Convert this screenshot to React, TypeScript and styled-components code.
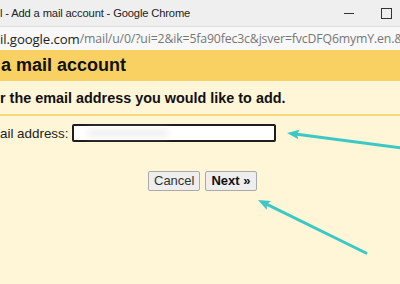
import React from 'react';
import styled, { createGlobalStyle } from 'styled-components';

const GlobalStyle = createGlobalStyle`
  html, body {
    margin: 0;
    padding: 0;
    width: 400px;
    height: 284px;
    overflow: hidden;
    background: #fff6d8;
  }
`;

const Window = styled.div`
  position: relative;
  width: 400px;
  height: 284px;
  overflow: hidden;
  display: flex;
  flex-direction: column;
  background: #fff6d8;
`;

const TitleBar = styled.div`
  height: 26px;
  display: flex;
  align-items: center;
  justify-content: space-between;
  background: #efefef;
  font-family: 'Liberation Sans', Arial, sans-serif;
  font-size: 11.2px;
  letter-spacing: -0.15px;
  color: #222;
  white-space: nowrap;
`;

const WindowControls = styled.div`
  display: flex;
  align-items: center;
  gap: 27px;
  padding-right: 8px;
`;

const MinimizeGlyph = styled.span`
  width: 10px;
  height: 1px;
  background: #333;
`;

const MaximizeGlyph = styled.span`
  width: 9px;
  height: 9px;
  border: 1px solid #333;
`;

const AddressBar = styled.div`
  height: 24px;
  display: flex;
  align-items: center;
  background: #f8f8f8;
  border-top: 1px solid #dcdcdc;
  box-sizing: border-box;
  font-family: 'Open Sans', 'Noto Sans', sans-serif;
  font-size: 12.3px;
  color: #777;
  white-space: nowrap;
  overflow: hidden;
  letter-spacing: -0.15px;
`;

const Host = styled.span`
  color: #222;
  font-size: 13.2px;
  letter-spacing: -0.1px;
`;

const Header = styled.div`
  height: 31px;
  display: flex;
  align-items: center;
  background: #f9d062;
  font-family: 'Liberation Sans', Arial, sans-serif;
  font-weight: bold;
  font-size: 18px;
  color: #111;
  padding-left: 1px;
`;

const Instruction = styled.div`
  height: 33px;
  display: flex;
  align-items: center;
  border-bottom: 2px solid #f6d77d;
  font-family: 'Liberation Sans', Arial, sans-serif;
  font-weight: bold;
  font-size: 14.4px;
  color: #111;
  white-space: nowrap;
`;

const FormRow = styled.div`
  display: flex;
  align-items: center;
  gap: 4px;
  padding-top: 8px;
  font-family: 'Liberation Sans', Arial, sans-serif;
  font-size: 13.4px;
  color: #222;
`;

const Label = styled.span`
  width: 68px;
  white-space: nowrap;
`;

const Input = styled.div`
  position: relative;
  width: 200px;
  height: 14px;
  border: 2px solid #1e1e1e;
  border-radius: 2px;
  background: #fff;
`;

const Blur = styled.span`
  position: absolute;
  left: 14px;
  top: 4px;
  width: 80px;
  height: 6px;
  background: #ececec;
  filter: blur(3px);
`;

const Buttons = styled.div`
  display: flex;
  justify-content: flex-start;
  gap: 5px;
  padding: 29px 0 0 148px;
`;

const Button = styled.button<{ $primary?: boolean }>`
  height: 20px;
  padding: 0 5px;
  margin: 0;
  border: 1px solid #a9a9a9;
  border-radius: 2px;
  background: #eeeeee;
  font-family: 'Liberation Sans', Arial, sans-serif;
  font-size: 13px;
  font-weight: ${(p) => (p.$primary ? 'bold' : 'normal')};
  color: ${(p) => (p.$primary ? '#111' : '#333')};
  line-height: 18px;
`;

const Arrows = styled.svg`
  position: absolute;
  left: 0;
  top: 0;
  pointer-events: none;
`;

function Arrow({ x1, y1, x2, y2 }: { x1: number; y1: number; x2: number; y2: number }): JSX.Element {
  const ang = Math.atan2(y2 - y1, x2 - x1);
  const len = 13;
  const spread = 0.38;
  const ax = x2 - len * Math.cos(ang - spread);
  const ay = y2 - len * Math.sin(ang - spread);
  const bx = x2 - len * Math.cos(ang + spread);
  const by = y2 - len * Math.sin(ang + spread);
  const sx = x2 - (len - 3) * Math.cos(ang);
  const sy = y2 - (len - 3) * Math.sin(ang);
  return (
    <g>
      <line x1={x1} y1={y1} x2={sx} y2={sy} stroke="#3cc9c6" strokeWidth={3} strokeLinecap="round" />
      <polygon points={`${x2},${y2} ${ax},${ay} ${sx},${sy} ${bx},${by}`} fill="#3cc9c6" />
    </g>
  );
}

export default function App(): JSX.Element {
  return (
    <>
      <GlobalStyle />
      <Window>
        <TitleBar>
          <span>l - Add a mail account - Google Chrome</span>
          <WindowControls>
            <MinimizeGlyph />
            <MaximizeGlyph />
          </WindowControls>
        </TitleBar>
        <AddressBar>
          <Host>il.google.com</Host>/mail/u/0/?ui=2&amp;ik=5fa90fec3c&amp;jsver=fvcDFQ6mymY.en.&amp;
        </AddressBar>
        <Header>a mail account</Header>
        <Instruction>r the email address you would like to add.</Instruction>
        <FormRow>
          <Label>ail address:</Label>
          <Input>
            <Blur />
          </Input>
        </FormRow>
        <Buttons>
          <Button>Cancel</Button>
          <Button $primary>Next »</Button>
        </Buttons>
        <Arrows width={400} height={284} viewBox="0 0 400 284">
          <Arrow x1={402} y1={148} x2={287} y2={133} />
          <Arrow x1={366} y1={253} x2={258} y2={200} />
        </Arrows>
      </Window>
    </>
  );
}
